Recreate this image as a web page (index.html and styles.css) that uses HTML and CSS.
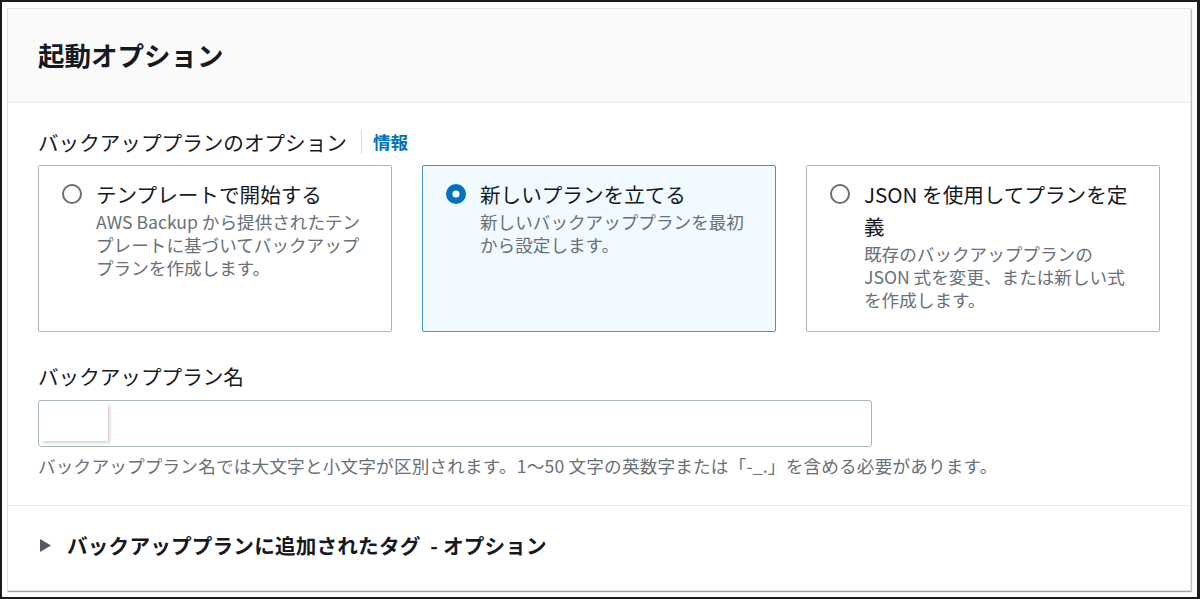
FILE: index.html
```html
<!DOCTYPE html>
<html lang="ja">
<head>
<meta charset="utf-8">
<title>起動オプション</title>
<link rel="stylesheet" href="styles.css">
</head>
<body>
<div class="frame">
  <section class="panel">
    <header class="panel-header">
      <h2 class="panel-title">起動オプション</h2>
    </header>
    <div class="panel-body">
      <div class="field-label">
        <span>バックアッププランのオプション</span>
        <span class="divider"></span>
        <a class="info">情報</a>
      </div>
      <div class="tiles">
        <div class="tile">
          <svg class="radio" width="20" height="20" viewBox="0 0 20 20"><circle cx="10" cy="10" r="9" fill="#fff" stroke="#687078" stroke-width="2"/></svg>
          <div class="tile-text">
            <div class="tile-title">テンプレートで開始する</div>
            <div class="tile-desc">AWS Backup から提供されたテンプレートに基づいてバックアッププランを作成します。</div>
          </div>
        </div>
        <div class="tile selected">
          <svg class="radio" width="20" height="20" viewBox="0 0 20 20"><circle cx="10" cy="10" r="10" fill="#0073bb"/><circle cx="10" cy="10" r="3.6" fill="#fff"/></svg>
          <div class="tile-text">
            <div class="tile-title">新しいプランを立てる</div>
            <div class="tile-desc">新しいバックアッププランを最初から設定します。</div>
          </div>
        </div>
        <div class="tile">
          <svg class="radio" width="20" height="20" viewBox="0 0 20 20"><circle cx="10" cy="10" r="9" fill="#fff" stroke="#687078" stroke-width="2"/></svg>
          <div class="tile-text">
            <div class="tile-title">JSON を使用してプランを定義</div>
            <div class="tile-desc">既存のバックアッププランの JSON 式を変更、または新しい式を作成します。</div>
          </div>
        </div>
      </div>

      <div class="field-label name-label">バックアッププラン名</div>
      <div class="input">
        <div class="patch"></div>
      </div>
      <div class="hint">バックアッププラン名では大文字と小文字が区別されます。1～50 文字の英数字または「-_.」を含める必要があります。</div>
    </div>
    <div class="expander">
      <svg class="caret" width="11" height="13" viewBox="0 0 11 13"><path d="M0 0 L11 6.5 L0 13 Z" fill="#545b64"/></svg>
      <span class="expander-title">バックアッププランに追加されたタグ&nbsp; - オプション</span>
    </div>
  </section>
</div>
</body>
</html>
```

FILE: styles.css
```css
* { box-sizing: border-box; }
html, body { margin: 0; padding: 0; background: #fff; }
body {
  font-family: "Noto Sans CJK JP", "Noto Sans", sans-serif;
  color: #16191f;
}
.frame {
  width: 1200px;
  height: 599px;
  border: 2px solid #1b1b1b;
  border-right-width: 3px;
  border-bottom-width: 2px;
  padding: 6px 6px 6px 5px;
  background: #fff;
}
.panel {
  height: 100%;
  border: 1px solid #e3e6e6;
  box-shadow: 1px 1px 1px 0 rgba(0, 28, 36, 0.25), 0 1px 1px 0 rgba(0, 28, 36, 0.2);
  display: flex;
  flex-direction: column;
}
.panel-header {
  height: 94px;
  background: #fafafa;
  border-bottom: 1px solid #eaeded;
  padding: 0 30px;
  display: flex;
  align-items: center;
}
.panel-title {
  margin: 0;
  font-size: 26.5px;
  font-weight: 700;
  line-height: 34px;
  color: #16191f;
  padding-bottom: 2px;
}
.panel-body {
  padding: 25px 30px 0 30px;
  border-bottom: 1px solid #eaeded;
  padding-bottom: 27px;
}
.field-label {
  display: flex;
  align-items: center;
  font-size: 20.6px;
  line-height: 28px;
  color: #16191f;
}
.divider {
  width: 1px;
  height: 24px;
  background: #d5dbdb;
  margin: 0 11px 0 14px;
}
.info {
  font-size: 17.6px;
  font-weight: 700;
  color: #0073bb;
}
.tiles {
  margin-top: 9px;
  display: grid;
  grid-template-columns: repeat(3, 1fr);
  column-gap: 30px;
}
.tile {
  border: 1px solid #aab7b8;
  border-radius: 2px;
  padding: 12px 20px 20px 23px;
  display: flex;
  align-items: flex-start;
  background: #fff;
}
.tile.selected {
  border-color: #4a92d0;
  background: #f1faff;
}
.radio {
  flex: none;
  margin-top: 6px;
  margin-right: 14px;
}
.tile-text {
  width: 272px;
}
.tile-title {
  font-size: 20.6px;
  line-height: 32px;
  color: #16191f;
}
.tile-desc {
  font-size: 17.6px;
  line-height: 23px;
  color: #687078;
}
.name-label {
  margin-top: 30px;
}
.input {
  position: relative;
  margin-top: 10px;
  width: 834px;
  height: 47px;
  border: 1px solid #aab7b8;
  border-radius: 3px;
  background: #fff;
}
.patch {
  position: absolute;
  left: 2px;
  top: 2px;
  width: 67px;
  height: 38px;
  background: #fff;
  box-shadow: 2px 2px 3px rgba(0, 0, 0, 0.18);
}
.hint {
  margin-top: 7px;
  font-size: 17.6px;
  letter-spacing: 0.2px;
  line-height: 24px;
  color: #687078;
}
.expander {
  padding: 25px 30px 0 32px;
  display: flex;
  align-items: center;
}
.caret {
  margin-right: 16px;
}
.expander-title {
  font-size: 20.6px;
  font-weight: 700;
  letter-spacing: 0.2px;
  line-height: 28px;
  color: #16191f;
}
```
